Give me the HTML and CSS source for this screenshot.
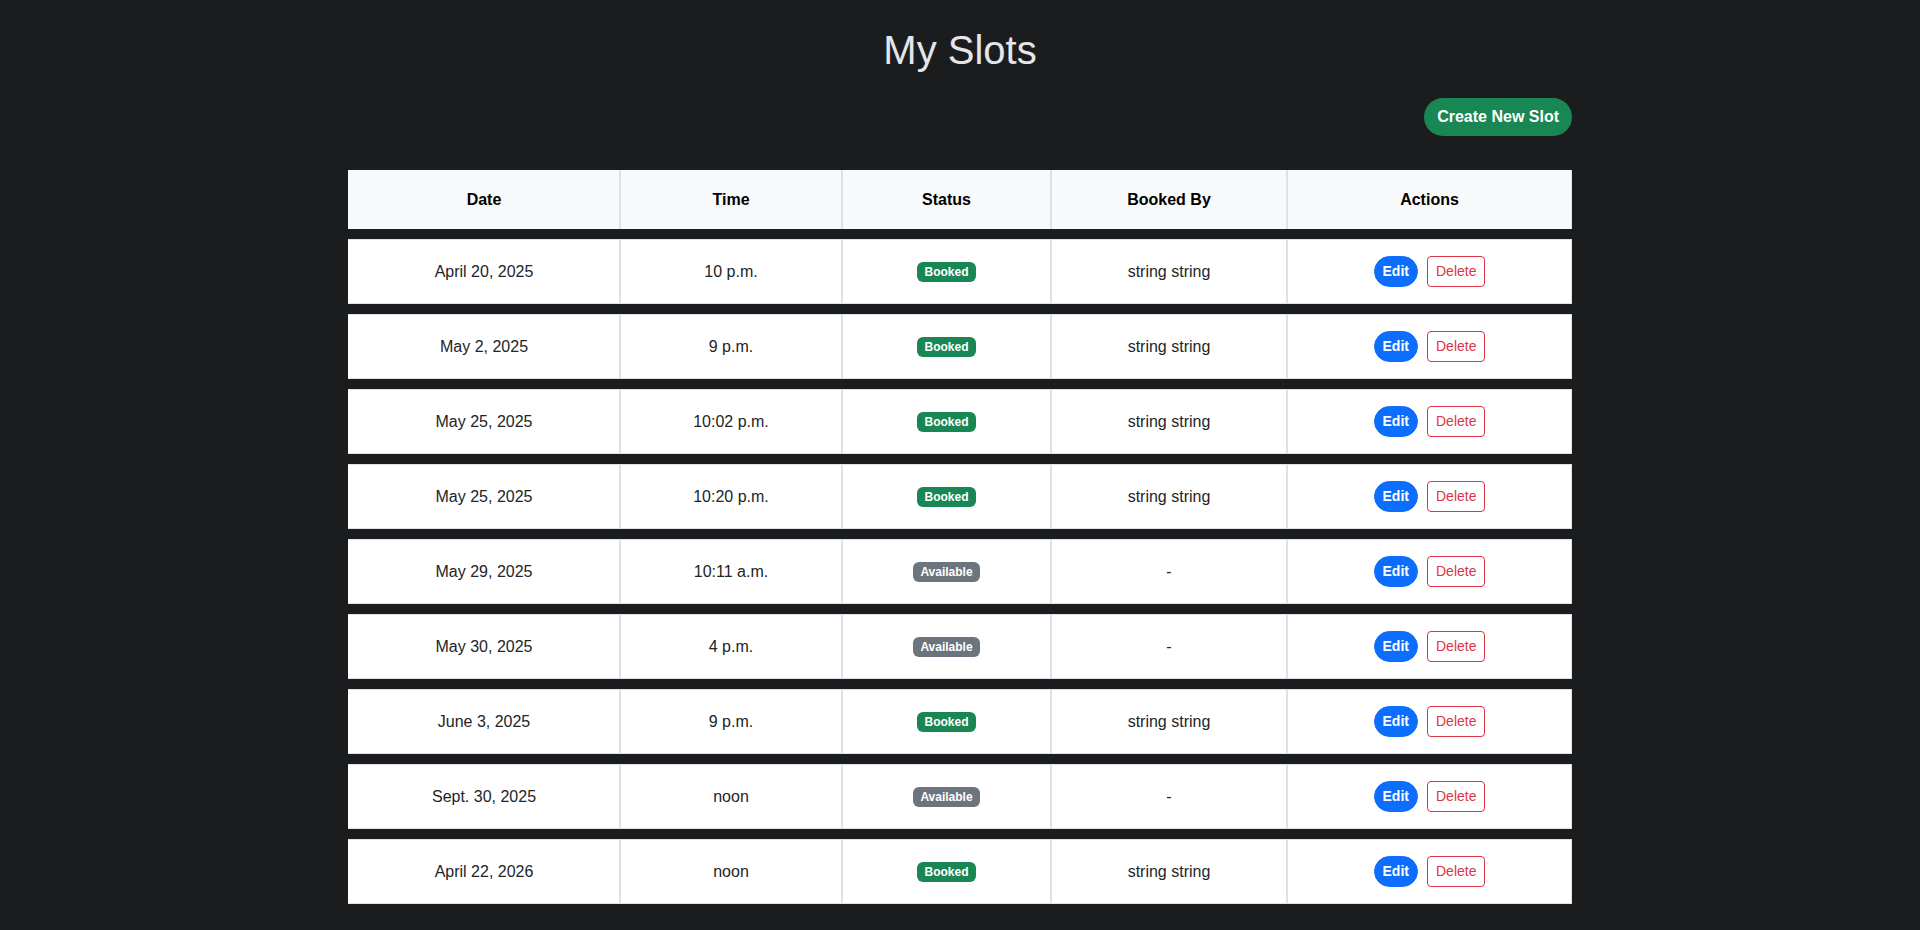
FILE: index.html
```html
<!DOCTYPE html>
<html lang="en">
<head>
<meta charset="utf-8">
<title>My Slots</title>
<link rel="stylesheet" href="styles.css">
</head>
<body>
<main class="container">
  <h1 class="title">My Slots</h1>
  <div class="toolbar">
    <a class="btn btn-create" href="#">Create New Slot</a>
  </div>
  <table class="slots">
    <colgroup>
      <col class="c-date"><col class="c-time"><col class="c-status"><col class="c-by"><col class="c-actions">
    </colgroup>
    <thead>
      <tr><th>Date</th><th>Time</th><th>Status</th><th>Booked By</th><th>Actions</th></tr>
    </thead>
    <tbody>
      <tr><td>April 20, 2025</td><td>10 p.m.</td><td><span class="badge booked">Booked</span></td><td>string string</td><td><div class="actions"><a class="btn-sm edit" href="#">Edit</a><a class="btn-sm del" href="#">Delete</a></div></td></tr>
      <tr><td>May 2, 2025</td><td>9 p.m.</td><td><span class="badge booked">Booked</span></td><td>string string</td><td><div class="actions"><a class="btn-sm edit" href="#">Edit</a><a class="btn-sm del" href="#">Delete</a></div></td></tr>
      <tr><td>May 25, 2025</td><td>10:02 p.m.</td><td><span class="badge booked">Booked</span></td><td>string string</td><td><div class="actions"><a class="btn-sm edit" href="#">Edit</a><a class="btn-sm del" href="#">Delete</a></div></td></tr>
      <tr><td>May 25, 2025</td><td>10:20 p.m.</td><td><span class="badge booked">Booked</span></td><td>string string</td><td><div class="actions"><a class="btn-sm edit" href="#">Edit</a><a class="btn-sm del" href="#">Delete</a></div></td></tr>
      <tr><td>May 29, 2025</td><td>10:11 a.m.</td><td><span class="badge available">Available</span></td><td>-</td><td><div class="actions"><a class="btn-sm edit" href="#">Edit</a><a class="btn-sm del" href="#">Delete</a></div></td></tr>
      <tr><td>May 30, 2025</td><td>4 p.m.</td><td><span class="badge available">Available</span></td><td>-</td><td><div class="actions"><a class="btn-sm edit" href="#">Edit</a><a class="btn-sm del" href="#">Delete</a></div></td></tr>
      <tr><td>June 3, 2025</td><td>9 p.m.</td><td><span class="badge booked">Booked</span></td><td>string string</td><td><div class="actions"><a class="btn-sm edit" href="#">Edit</a><a class="btn-sm del" href="#">Delete</a></div></td></tr>
      <tr><td>Sept. 30, 2025</td><td>noon</td><td><span class="badge available">Available</span></td><td>-</td><td><div class="actions"><a class="btn-sm edit" href="#">Edit</a><a class="btn-sm del" href="#">Delete</a></div></td></tr>
      <tr><td>April 22, 2026</td><td>noon</td><td><span class="badge booked">Booked</span></td><td>string string</td><td><div class="actions"><a class="btn-sm edit" href="#">Edit</a><a class="btn-sm del" href="#">Delete</a></div></td></tr>
    </tbody>
  </table>
</main>
</body>
</html>
```
FILE: styles.css
```css
* { box-sizing: border-box; }

html, body {
  margin: 0;
  background: #1b1c1e;
  font-family: "Liberation Sans", Arial, sans-serif;
  font-size: 16px;
  line-height: 1.5;
  color: #212529;
}

.container {
  width: 1224px;
  margin: 0 auto;
  padding-top: 26px;
  padding-bottom: 16px;
}

.title {
  margin: 0 0 24px;
  font-size: 40px;
  font-weight: 400;
  line-height: 48px;
  text-align: center;
  color: #e4e6ea;
}

.toolbar {
  display: flex;
  justify-content: flex-end;
  margin-bottom: 24px;
}

.btn {
  display: inline-block;
  text-decoration: none;
  font-weight: 700;
  font-size: 16px;
  line-height: 24px;
  padding: 7px 13px;
  border-radius: 50rem;
}

.btn-create {
  background: #198754;
  color: #fff;
}

.slots {
  width: 1224px;
  table-layout: fixed;
  border-collapse: separate;
  border-spacing: 0 10px;
}

.c-date { width: 272px; }
.c-time { width: 222px; }
.c-status { width: 209px; }
.c-by { width: 236px; }
.c-actions { width: 285px; }

.slots th,
.slots td {
  text-align: center;
  vertical-align: middle;
  padding: 16px;
  border-left: 1px solid #dee2e6;
  border-right: 1px solid #dee2e6;
}

.slots th:first-child,
.slots td:first-child {
  border-left-color: #fff;
}

.slots th:first-child {
  border-left-color: #f8f9fa;
}

.slots th {
  height: 59px;
  background: #f8f9fa;
  color: #000;
  font-weight: 700;
}

.slots td {
  height: 65px;
  background: #fff;
  border-top: 1px solid #dee2e6;
  border-bottom: 1px solid #dee2e6;
}

.badge {
  display: inline-block;
  font-size: 12px;
  font-weight: 700;
  line-height: 12px;
  padding: 4px 7.5px;
  border-radius: 6px;
  color: #fff;
  vertical-align: middle;
}

.badge.booked { background: #198754; }
.badge.available { background: #6c757d; }

.actions {
  display: flex;
  justify-content: center;
  gap: 9px;
}

.btn-sm {
  display: inline-block;
  text-decoration: none;
  font-size: 14px;
  line-height: 21px;
  padding: 4px 8px;
  border: 1px solid transparent;
}

.btn-sm.edit {
  background: #0d6efd;
  border-color: #0d6efd;
  color: #fff;
  font-weight: 700;
  border-radius: 50rem;
}

.btn-sm.del {
  color: #dc3545;
  border-color: #dc3545;
  background: #fff;
  border-radius: 4px;
}
```
